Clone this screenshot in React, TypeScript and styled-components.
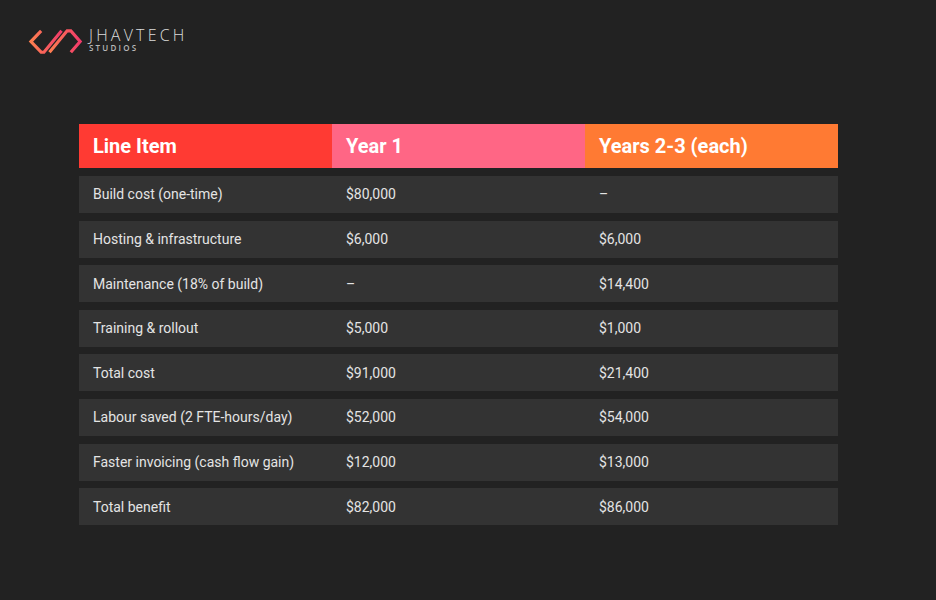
import styled, { createGlobalStyle } from "styled-components";

const GlobalStyle = createGlobalStyle`
  html, body {
    margin: 0;
    padding: 0;
    background: #222222;
  }
  body {
    font-family: Roboto, "Noto Sans", "Liberation Sans", sans-serif;
  }
`;

type Row = { label: string; y1: string; y2: string };

const rows: Row[] = [
  { label: "Build cost (one-time)", y1: "$80,000", y2: "–" },
  { label: "Hosting & infrastructure", y1: "$6,000", y2: "$6,000" },
  { label: "Maintenance (18% of build)", y1: "–", y2: "$14,400" },
  { label: "Training & rollout", y1: "$5,000", y2: "$1,000" },
  { label: "Total cost", y1: "$91,000", y2: "$21,400" },
  { label: "Labour saved (2 FTE-hours/day)", y1: "$52,000", y2: "$54,000" },
  { label: "Faster invoicing (cash flow gain)", y1: "$12,000", y2: "$13,000" },
  { label: "Total benefit", y1: "$82,000", y2: "$86,000" },
];

const App = () => {
  return (
    <Page>
      <GlobalStyle />
      <Brand>
        <LogoMark />
        <BrandText>
          <BrandName>JHAVTECH</BrandName>
          <BrandSub>STUDIOS</BrandSub>
        </BrandText>
      </Brand>
      <Table>
        <HeadRow>
          <HeadCell $bg="#ff3a33">Line Item</HeadCell>
          <HeadCell $bg="#ff6685">Year 1</HeadCell>
          <HeadCell $bg="#ff7a33">Years 2-3 (each)</HeadCell>
        </HeadRow>
        {rows.map((r) => (
          <BodyRow key={r.label}>
            <Cell>{r.label}</Cell>
            <Cell>{r.y1}</Cell>
            <Cell>{r.y2}</Cell>
          </BodyRow>
        ))}
      </Table>
    </Page>
  );
};

export default App;

const LogoMark = () => (
  <svg width="56" height="26" viewBox="0 0 58 28" fill="none">
    <defs>
      <linearGradient id="jt" x1="0" y1="0" x2="1" y2="0">
        <stop offset="0" stopColor="#ff7f50" />
        <stop offset="1" stopColor="#f23a6a" />
      </linearGradient>
    </defs>
    <g
      stroke="url(#jt)"
      strokeWidth="3.4"
      strokeLinejoin="miter"
      strokeLinecap="butt"
    >
      <path d="M13 2 L2 13.5 L13 25 L16 25 L35 2" />
      <path d="M22 25 L41 2 L45 2 L55 13.5 L45 25" />
    </g>
  </svg>
);

const Page = styled.div`
  min-height: 600px;
  padding: 29px 0 0 0;
  box-sizing: border-box;
`;

const Brand = styled.div`
  display: flex;
  align-items: center;
  gap: 5px;
  margin-left: 28px;
  height: 26px;
`;

const BrandText = styled.div`
  display: flex;
  flex-direction: column;
  gap: 2px;
  margin-top: -4px;
`;

const BrandName = styled.span`
  font-family: "Open Sans", "Liberation Sans", sans-serif;
  font-weight: 300;
  font-size: 16px;
  line-height: 14px;
  letter-spacing: 3.2px;
  color: #dcdcdc;
`;

const BrandSub = styled.span`
  font-family: "Open Sans", "Liberation Sans", sans-serif;
  font-weight: 600;
  font-size: 8px;
  line-height: 8px;
  letter-spacing: 2.2px;
  color: #b8b8b8;
`;

const Table = styled.div`
  width: 759px;
  margin: 69px 0 0 79px;
  display: flex;
  flex-direction: column;
  gap: 7.6px;
`;

const HeadRow = styled.div`
  display: grid;
  grid-template-columns: repeat(3, 1fr);
  height: 44px;
  margin-bottom: 0.4px;
`;

const HeadCell = styled.div<{ $bg: string }>`
  background: ${(p) => p.$bg};
  color: #ffffff;
  font-weight: 700;
  font-size: 20px;
  display: flex;
  align-items: center;
  padding-left: 14px;
`;

const BodyRow = styled.div`
  display: grid;
  grid-template-columns: repeat(3, 1fr);
  height: 37px;
  background: #333333;
`;

const Cell = styled.div`
  display: flex;
  align-items: center;
  padding-left: 14px;
  font-size: 14px;
  color: #e4e4e4;
`;
